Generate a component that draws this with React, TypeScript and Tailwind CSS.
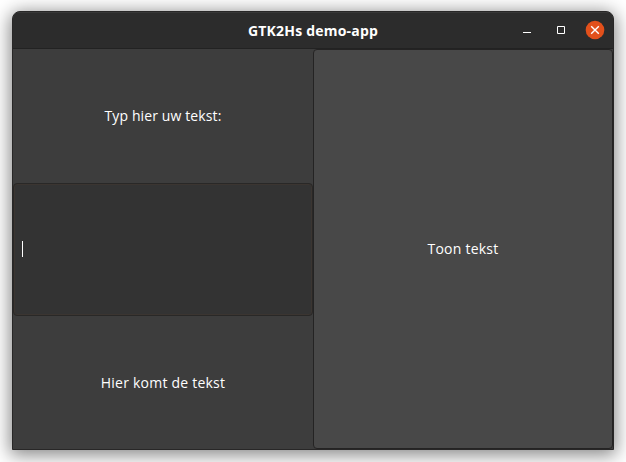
export default function App() {
  return (
    <div className="h-[462px] w-[626px] overflow-hidden bg-white pl-[12px] pt-[11px] font-['Open_Sans','Noto_Sans',sans-serif] text-[14px] tracking-[0.12px] text-white">
      <main className="flex h-[439px] w-[602px] flex-col overflow-hidden rounded-t-[8px] border border-[#282727] bg-[#3d3d3d] shadow-[0_3px_18px_2px_rgba(0,0,0,0.48)]">
        <header className="grid h-[37px] shrink-0 grid-cols-[1fr_auto_1fr] items-center border-b border-[#222] bg-[#2c2c2c] shadow-[inset_0_1px_0_#383838]">
          <span />
          <h1 className="translate-y-px text-[14px] font-bold leading-5 tracking-[0.2px] whitespace-nowrap">GTK2Hs demo-app</h1>
          <div className="flex items-center justify-end pr-[8px]">
            <svg width="82" height="20" viewBox="0 0 82 20" fill="none" stroke="white">
              <path d="M0 12.5h8" />
              <path d="M34.5 6.5h7v7h-7z" />
              <circle cx="72" cy="10" r="9.3" fill="#e2501b" stroke="none" />
              <path d="m68.2 6.2 7.6 7.6m0-7.6-7.6 7.6" strokeWidth="1.4" />
            </svg>
          </div>
        </header>
        <div className="grid min-h-0 flex-1 grid-cols-2">
          <div className="grid grid-rows-[134px_133px_133px]">
            <p className="flex items-center justify-center pb-[2px]">Typ hier uw tekst:</p>
            <div className="flex items-center rounded-[4px] border border-[#292827] bg-[#333] pb-[2px] pl-[8px] shadow-[inset_0_0_0_1px_#3b3531]">
              <span className="h-4 w-px bg-white" />
            </div>
            <p className="flex items-center justify-center tracking-[0.22px]">Hier komt de tekst</p>
          </div>
          <button className="rounded-[4px] border border-[#242323] bg-[#484848] pb-[2px] tracking-[0.24px]">Toon tekst</button>
        </div>
      </main>
    </div>
  );
}
